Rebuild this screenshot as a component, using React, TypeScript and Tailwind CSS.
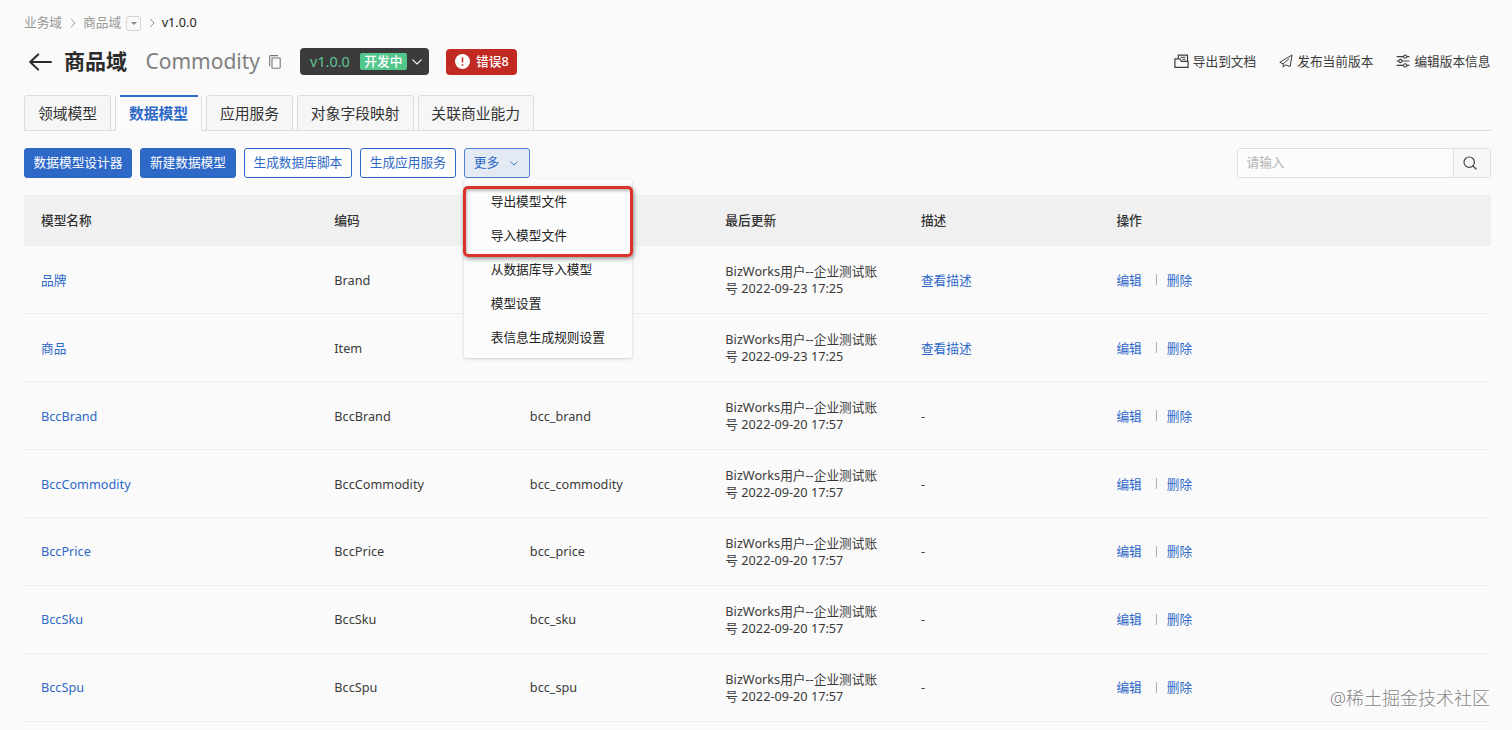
import type { ReactNode } from 'react';
import clsx from 'clsx';

type Model = {
  name: string;
  code: string;
  table: string;
  updatedAt: string;
  hasDescription?: boolean;
};

const MODELS: Model[] = [
  { name: '品牌', code: 'Brand', table: '', updatedAt: '2022-09-23 17:25', hasDescription: true },
  { name: '商品', code: 'Item', table: '', updatedAt: '2022-09-23 17:25', hasDescription: true },
  { name: 'BccBrand', code: 'BccBrand', table: 'bcc_brand', updatedAt: '2022-09-20 17:57' },
  { name: 'BccCommodity', code: 'BccCommodity', table: 'bcc_commodity', updatedAt: '2022-09-20 17:57' },
  { name: 'BccPrice', code: 'BccPrice', table: 'bcc_price', updatedAt: '2022-09-20 17:57' },
  { name: 'BccSku', code: 'BccSku', table: 'bcc_sku', updatedAt: '2022-09-20 17:57' },
  { name: 'BccSpu', code: 'BccSpu', table: 'bcc_spu', updatedAt: '2022-09-20 17:57' },
];

const TABS = [
  { label: '领域模型', width: 'w-[87px]' },
  { label: '数据模型', width: 'w-[87px]' },
  { label: '应用服务', width: 'w-[87px]' },
  { label: '对象字段映射', width: 'w-[116.5px]' },
  { label: '关联商业能力', width: 'w-[116.5px]' },
];

const MENU_ITEMS = ['导出模型文件', '导入模型文件', '从数据库导入模型', '模型设置', '表信息生成规则设置'];

const COLUMNS = ['模型名称', '编码', '', '最后更新', '描述', '操作'];

const ROW_GRID = 'grid grid-cols-[3fr_2fr_2fr_2fr_2fr_4fr] items-center';

function Chevron({ className }: { className?: string }) {
  return (
    <svg className={className} viewBox="0 0 10 6" fill="none" stroke="currentColor" strokeWidth="1.1" strokeLinecap="round">
      <path d="M0.8 0.8 5 5l4.2-4.2" />
    </svg>
  );
}

function Separator() {
  return (
    <svg className="h-[10px] w-[6px] text-[#999]" viewBox="0 0 6 10" fill="none" stroke="currentColor">
      <path d="M1 0.8 5 5 1 9.2" />
    </svg>
  );
}

function ExportIcon() {
  return (
    <svg className="h-[15px] w-[15px]" viewBox="0 0 15 15" fill="none" stroke="currentColor" strokeWidth="1.2">
      <path d="M4.3 4.4V1.1h9.2v6" />
      <path d="M6.6 3.3h4.8M8.4 5.3h3" strokeWidth="1" />
      <path d="M0.9 13.4V4.8h5l1.3 2.5h6.9v6.1z" strokeLinejoin="round" />
    </svg>
  );
}

function PlaneIcon() {
  return (
    <svg className="h-[14px] w-[14px]" viewBox="0 0 14 14" fill="none" stroke="currentColor" strokeWidth="1" strokeLinejoin="round">
      <path d="M13 1 0.8 8.3l3.4 1.5v3.4l2.2-2.4 4.8 1.7z" />
      <path d="M10.2 4.6 4.2 9.8" />
    </svg>
  );
}

function SettingsIcon() {
  return (
    <svg className="h-[14px] w-[14px]" viewBox="0 0 14 14" fill="none" stroke="currentColor" strokeWidth="1.1">
      <path d="M0.7 2.6h6.9M10.8 2.6h2.6M0.7 7h2.1M6 7h7.4M0.7 11.4h6.9M10.8 11.4h2.6" />
      <circle cx="9.2" cy="2.6" r="1.6" />
      <circle cx="4.4" cy="7" r="1.6" />
      <circle cx="9.2" cy="11.4" r="1.6" />
    </svg>
  );
}

function HeaderAction({ icon, label }: { icon: ReactNode; label: string }) {
  return (
    <button className="flex items-center gap-1 text-[12.7px] text-[#3c3c3c]">
      {icon}
      {label}
    </button>
  );
}

function ToolbarButton({ label, primary, className }: { label: string; primary?: boolean; className?: string }) {
  return (
    <button
      className={clsx(
        'h-[30px] shrink-0 rounded-[3px] border border-[#2e69c8] text-[12.7px] whitespace-nowrap',
        primary ? 'bg-[#2e69c8] text-white' : 'bg-white text-[#2e69c8]',
        className,
      )}
    >
      {label}
    </button>
  );
}

function MoreMenu() {
  return (
    <div className="relative">
      <button className="flex h-[30px] w-[66px] items-center rounded-[3px] border border-[#4c83d2] bg-[#e4eaf4] pl-[9px] text-[12.7px] text-[#2e69c8]">
        更多
        <Chevron className="ml-[11px] h-[5px] w-[8px]" />
      </button>
      <div className="absolute top-[31px] left-0 z-10 h-[179px] w-[168px] rounded-[2px] bg-[#fcfcfc] pt-[6px] shadow-[0_1px_3px_rgba(0,0,0,0.18)]">
        {MENU_ITEMS.map((item) => (
          <div key={item} className="flex h-[33.9px] items-center pl-[27px] text-[12.7px] text-[#222]">
            {item}
          </div>
        ))}
      </div>
      {/* highlight around the import / export entries */}
      <div className="absolute top-[38px] -left-px z-20 h-[71px] w-[170px] rounded-[5px] border-3 border-[#d8342a] shadow-[1px_2px_4px_rgba(0,0,0,0.4),inset_1px_2px_3px_rgba(0,0,0,0.25)]" />
    </div>
  );
}

function ModelRow({ model }: { model: Model }) {
  return (
    <div className={clsx(ROW_GRID, 'h-[67.95px] border-b border-[#ececec] pt-px text-[12.7px] leading-[16.5px] text-[#3a3a3a]')}>
      <a className="px-[17px] text-[#2e69c8]">{model.name}</a>
      <span className="px-[17px]">{model.code}</span>
      <span className="px-[17px]">{model.table}</span>
      <span className="pl-[17px] whitespace-nowrap">
        BizWorks用户--企业测试账
        <br />号 {model.updatedAt}
      </span>
      <span className="px-[17px]">{model.hasDescription ? <a className="text-[#2e69c8]">查看描述</a> : '-'}</span>
      <span className="flex items-center px-[17px] text-[#2e69c8]">
        <a>编辑</a>
        <i className="mr-[10px] ml-[14px] h-[11px] w-px bg-[#b0b0b0]" />
        <a>删除</a>
      </span>
    </div>
  );
}

export default function App() {
  return (
    <div className="relative h-[730px] w-[1512px] overflow-hidden bg-[#fafafa] pr-[21.5px] pl-[24px] font-['Noto_Sans','Noto_Sans_CJK_SC',sans-serif] text-[#333]">
      {/* Breadcrumb */}
      <nav className="flex h-[46px] items-center text-[12.7px] text-[#999]">
        <span>业务域</span>
        <span className="mr-[7px] ml-[8px]"><Separator /></span>
        <span>商品域</span>
        <span className="ml-[5px] flex h-[15px] w-[15px] items-center justify-center rounded-[3px] border border-[#d4d4d4]">
          <svg className="h-[3px] w-[6px]" viewBox="0 0 6 3"><path d="M0 0h6L3 3z" fill="#888" /></svg>
        </span>
        <span className="mr-[7px] ml-[7.5px]"><Separator /></span>
        <span className="text-[#222]">v1.0.0</span>
      </nav>

      {/* Title bar */}
      <header className="flex h-[31px] items-center">
        <svg className="ml-[5px] h-[18px] w-[23px]" viewBox="0 0 23 18" fill="none" stroke="#2a2a2a" strokeWidth="2" strokeLinecap="round" strokeLinejoin="round">
          <path d="M9.2 1.4 1.2 9l8 7.6M1.2 9h20.8" />
        </svg>
        <h1 className="ml-[12px] text-[21px] font-bold text-[#2b2b2b]">商品域</h1>
        <span className="ml-[18.5px] text-[21px] text-[#808080]">Commodity</span>
        <svg className="ml-[9px] h-[14px] w-[12px]" viewBox="0 0 12 14" fill="none" stroke="#777" strokeWidth="1.1">
          <rect x="3" y="3" width="8.2" height="10.2" rx="0.8" />
          <path d="M0.7 11V1.6a1 1 0 0 1 1-1H9" />
        </svg>
        <button className="ml-[19px] flex h-[27px] w-[129px] items-center rounded-[4px] bg-[#3b3b3b] pl-[10px]">
          <span className="text-[14.4px] text-[#5cc795]">v1.0.0</span>
          <span className="ml-[10px] flex h-[17px] w-[47px] items-center justify-center rounded-[2px] bg-[#53c68c] text-[12.7px] font-medium text-white">开发中</span>
          <Chevron className="ml-[5px] h-[6px] w-[10px] text-white" />
        </button>
        <button className="ml-[17px] flex h-[26px] w-[71px] items-center rounded-[4px] bg-[#c02a23] pl-[9px] text-[12.7px] font-medium text-white">
          <svg className="mr-[6px] h-[15px] w-[15px]" viewBox="0 0 15 15">
            <circle cx="7.5" cy="7.5" r="7.5" fill="#fff" />
            <path d="M7.5 3.2v5.2M7.5 10.2v1.6" stroke="#c02a23" strokeWidth="1.5" />
          </svg>
          错误8
        </button>
        <div className="ml-auto flex gap-[23px]">
          <HeaderAction icon={<ExportIcon />} label="导出到文档" />
          <HeaderAction icon={<PlaneIcon />} label="发布当前版本" />
          <HeaderAction icon={<SettingsIcon />} label="编辑版本信息" />
        </div>
      </header>

      {/* Tabs */}
      <div className="mt-[18px] flex h-[36px] gap-[4px] border-b border-[#dcdcdc]">
        {TABS.map((tab) => {
          const active = tab.label === '数据模型';
          return (
            <div
              key={tab.label}
              className={clsx(
                'flex h-[36px] justify-center rounded-t-[3px] border border-[#dcdcdc] text-[14.8px]',
                tab.width,
                active ? 'border-t-[#fafafa] border-b-[#fafafa] bg-[#fbfbfb] font-bold text-[#2e69c8]' : 'bg-[#f6f6f6] text-[#333]',
              )}
            >
              <span className={clsx('flex items-center', active && '-mt-px w-[78px] justify-center border-t-2 border-[#2e69c8]')}>
                {tab.label}
              </span>
            </div>
          );
        })}
      </div>

      {/* Toolbar */}
      <div className="mt-[17px] flex h-[30px] gap-[8.2px]">
        <ToolbarButton label="数据模型设计器" primary className="w-[108px]" />
        <ToolbarButton label="新建数据模型" primary className="w-[95.5px]" />
        <ToolbarButton label="生成数据库脚本" className="w-[108px]" />
        <ToolbarButton label="生成应用服务" className="w-[95.5px]" />
        <MoreMenu />
        <div className="ml-auto flex w-[254px] rounded-[3px] border border-[#dedede] text-[12.7px]">
          <div className="flex flex-1 items-center bg-[#fcfcfc] pl-[9px] text-[#b3b3b3]">请输入</div>
          <button className="flex w-[37px] items-center justify-center border-l border-[#dedede] bg-[#f7f7f7]">
            <svg className="-ml-[3px] h-[14px] w-[14px]" viewBox="0 0 14 14" fill="none" stroke="#444" strokeWidth="1.2" strokeLinecap="round">
              <circle cx="6.2" cy="6.2" r="5.2" />
              <path d="m10 10 3 3" />
            </svg>
          </button>
        </div>
      </div>

      {/* Model table */}
      <div className="mt-[17px]">
        <div className={clsx(ROW_GRID, 'h-[51px] bg-[#f0f0f0] text-[12.7px] font-medium text-[#333]')}>
          {COLUMNS.map((column, i) => (
            <span key={i} className="px-[17px]">{column}</span>
          ))}
        </div>
        {MODELS.map((model) => (
          <ModelRow key={model.name} model={model} />
        ))}
      </div>

      <div className="absolute right-[22px] bottom-[18px] text-[18px] leading-[27px] font-light text-[#858585] [text-shadow:1px_1px_0_#fff]">
        @稀土掘金技术社区
      </div>
    </div>
  );
}
